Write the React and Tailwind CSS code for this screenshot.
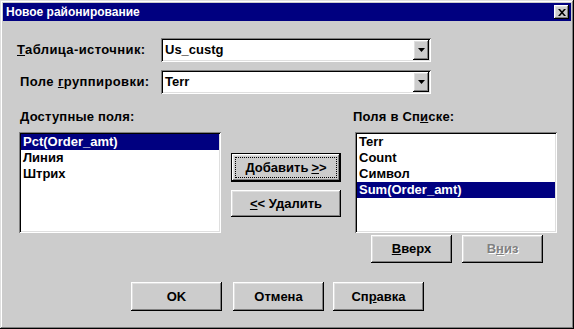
import React from "react";

const raised =
  "shadow-[inset_-1px_-1px_#000,inset_1px_1px_#fff,inset_-2px_-2px_#808080,inset_2px_2px_#dfdfdf]";
const sunken =
  "shadow-[inset_1px_1px_#808080,inset_-1px_-1px_#fff,inset_2px_2px_#000,inset_-2px_-2px_#dfdfdf]";

const Combo = ({ value }) => (
  <div className={`w-[270px] h-[24px] bg-white p-[2px] flex ${sunken}`}>
    <div className="flex-1 flex items-center pl-[2px]">{value}</div>
    <div className={`w-[16px] h-full bg-[#cccccc] flex items-center justify-center ${raised}`}>
      <svg width="7" height="4" viewBox="0 0 7 4">
        <path d="M0 0h7L3.5 4z" fill="#000" />
      </svg>
    </div>
  </div>
);

const ListBox = ({ items, selected }) => (
  <div className={`w-[202px] h-[101px] bg-white p-[2px] ${sunken}`}>
    {items.map((item) => (
      <div
        key={item}
        className={
          item === selected
            ? "h-[16px] leading-[16px] pl-[2px] bg-[#000080] text-white"
            : "h-[16px] leading-[16px] pl-[2px]"
        }
      >
        {item}
      </div>
    ))}
  </div>
);

const Button = ({ children, className = "", disabled }) => (
  <div
    className={`bg-[#cccccc] flex items-center justify-center ${raised} ${className} ${
      disabled ? "text-[#808080] [text-shadow:1px_1px_0_#fff]" : ""
    }`}
  >
    {children}
  </div>
);

export default function App() {
  return (
    <div
      className={`w-[574px] h-[329px] bg-[#cccccc] p-[3px] flex flex-col font-['Liberation_Sans',Arial,sans-serif] font-bold text-[13px] text-black shadow-[inset_-1px_-1px_#000,inset_1px_1px_#dfdfdf,inset_-2px_-2px_#808080,inset_2px_2px_#fff]`}
    >
      {/* Title bar */}
      <div className="h-[18px] bg-[#000080] flex items-center justify-between pl-[3px] pr-[2px]">
        <span className="text-white text-[12px]">Новое районирование</span>
        <div className={`w-[15px] h-[14px] bg-[#cccccc] flex items-center justify-center ${raised}`}>
          <svg width="8" height="7" viewBox="0 0 8 7">
            <path d="M0 0h2l2 2.2L6 0h2L5 3.5 8 7H6L4 4.8 2 7H0l3-3.5z" fill="#000" />
          </svg>
        </div>
      </div>

      <div className="flex-1 flex flex-col pl-[14px]">
        <div className="mt-[17px] flex items-center">
          <div className="w-[144px] tracking-[0.4px]">
            <u>Т</u>аблица-источник:
          </div>
          <Combo value="Us_custg" />
        </div>
        <div className="mt-[8px] flex items-center">
          <div className="w-[144px] pl-[3px] tracking-[0.4px]">
            Поле <u>г</u>руппировки:
          </div>
          <Combo value="Terr" />
        </div>

        <div className="mt-[15px] flex h-[16px] items-center tracking-[0.2px]">
          <div className="w-[336px] pl-[3px]">
            <u>Д</u>оступные поля:
          </div>
          <div>
            Поля в Сп<u>и</u>ске:
          </div>
        </div>

        <div className="mt-[7px] flex items-start">
          <div className="ml-[2px]">
            <ListBox
              items={["Pct(Order_amt)", "Линия", "Штрих"]}
              selected="Pct(Order_amt)"
            />
          </div>
          <div className="ml-[10px] w-[110px] flex flex-col">
            <div className="mt-[21px] h-[29px] bg-black p-[1px]">
              <div className={`h-full bg-[#cccccc] p-[3px] ${raised}`}>
                <div className="h-full border border-dotted border-black flex items-center justify-center">
                  Добавить <u className="ml-[3px]">&gt;</u>&gt;
                </div>
              </div>
            </div>
            <Button className="mt-[8px] h-[27px]">
              <u>&lt;</u>&lt; Удалить
            </Button>
          </div>
          <div className="ml-[14px] flex flex-col">
            <ListBox
              items={["Terr", "Count", "Символ", "Sum(Order_amt)"]}
              selected="Sum(Order_amt)"
            />
            <div className="mt-[2px] ml-[16px] flex gap-[10px]">
              <Button className="w-[81px] h-[28px]">
                <span>
                  <u>В</u>верх
                </span>
              </Button>
              <Button className="w-[81px] h-[28px]" disabled>
                <span>
                  В<u>н</u>из
                </span>
              </Button>
            </div>
          </div>
        </div>

        <div className="mt-[19px] ml-[114px] flex">
          <Button className="w-[91px] h-[29px]">OK</Button>
          <Button className="ml-[11px] w-[91px] h-[29px]">Отмена</Button>
          <Button className="ml-[9px] w-[91px] h-[29px]">
            <span>
              Сп<u>р</u>авка
            </span>
          </Button>
        </div>
      </div>
    </div>
  );
}
